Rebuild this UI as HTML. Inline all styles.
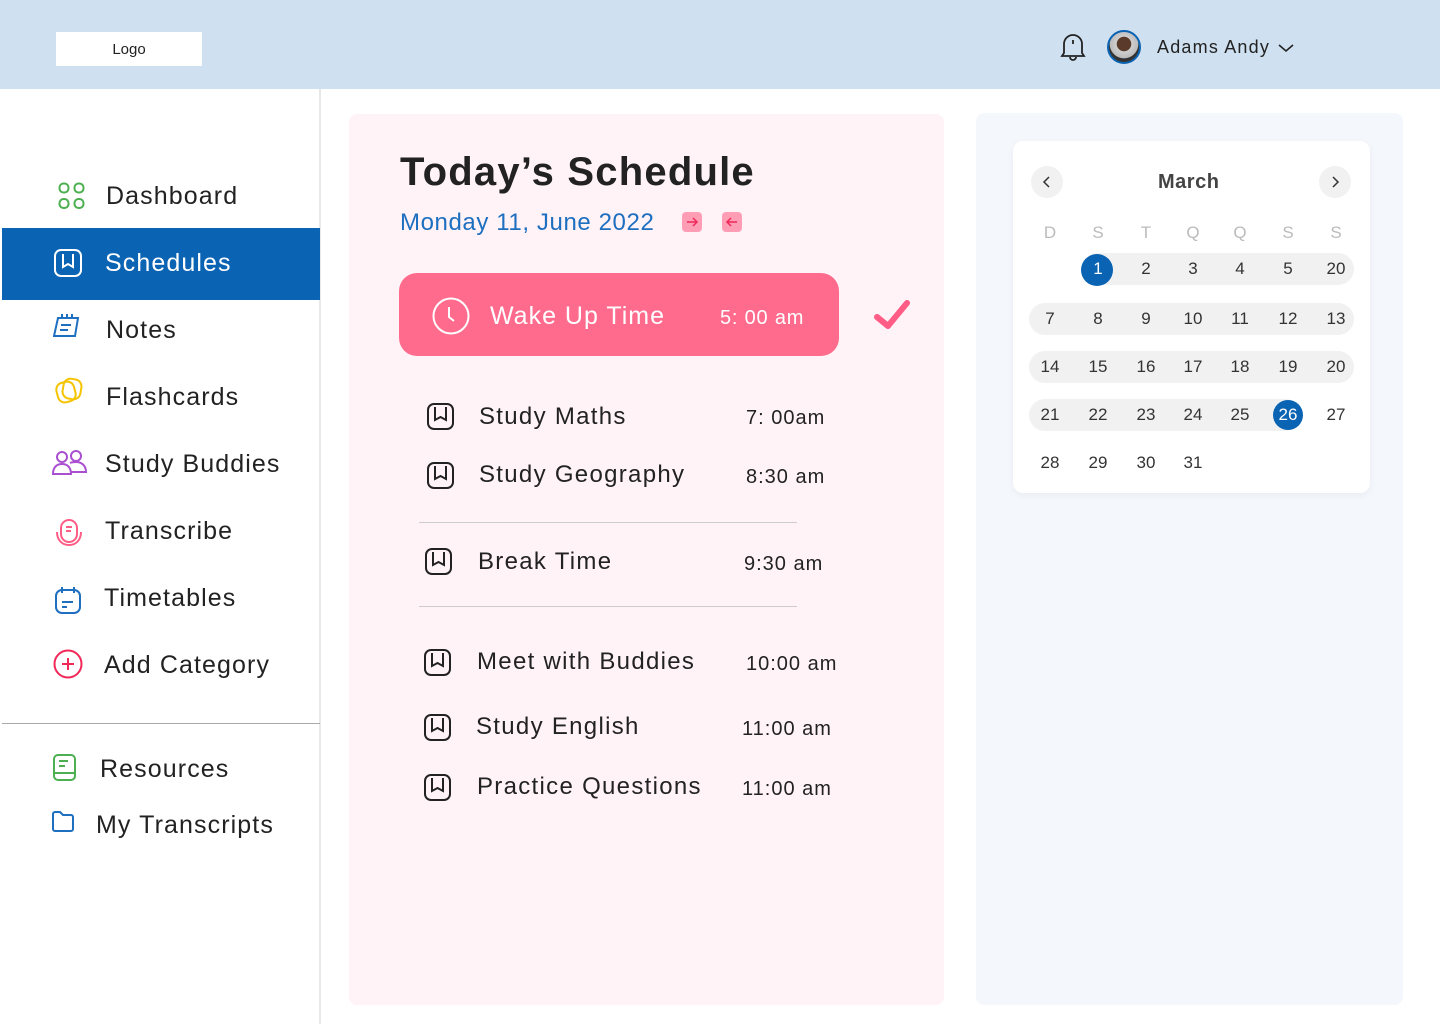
<!DOCTYPE html>
<html><head><meta charset="utf-8"><style>
*{margin:0;padding:0;box-sizing:border-box}
body{width:1440px;height:1024px;background:#fff;font-family:"Liberation Sans",sans-serif;color:#222;position:relative;overflow:hidden}
.a{position:absolute}
.hdr{left:0;top:0;width:1440px;height:89px;background:#cfe0f0}
.logo{left:56px;top:32px;width:146px;height:34px;background:#fff;font-size:15px;text-align:center;line-height:36px}
.side{left:319px;top:89px;width:2px;height:935px;background:#e8e8e8}
.nav{font-size:25px;color:#222;letter-spacing:1.1px;margin-top:2px}
.sel{left:2px;top:228px;width:318px;height:72px;background:#0b63b3}
.card{left:349px;top:114px;width:595px;height:891px;background:#fff3f7;border-radius:8px}
.rp{left:976px;top:113px;width:427px;height:892px;background:#f4f8fc;border-radius:8px}
.cal{left:1013px;top:141px;width:357px;height:352px;background:#fff;border-radius:10px;box-shadow:0 2px 8px rgba(0,0,0,.05)}
.d{font-size:17px;color:#333;width:40px;text-align:center;transform:translateX(-20px);margin-top:1px}
.h{color:#bbb}
.pill{background:#f1f1f1;border-radius:16px;height:32px}
.it{font-size:24px;color:#222;letter-spacing:1.3px;margin-top:2px}
.tm{font-size:20px;color:#222;letter-spacing:1px;margin-top:2px}
</style></head><body>
<div class="a hdr"></div>
<div class="a logo">Logo</div>
<svg class="a" style="left:1059px;top:32px" width="28" height="30" viewBox="0 0 28 30" fill="none" stroke="#222" stroke-width="1.8"><path d="M5 21 V12 a9 9 0 0 1 18 0 V21 L25 24 H3 Z"/><path d="M11 25 a3 3 0 0 0 6 0"/><path d="M14 8v4"/></svg>
<div class="a" style="left:1107px;top:30px;width:34px;height:34px;border-radius:50%;border:2px solid #0b63b3;background:radial-gradient(circle at 50% 40%,#5a3a2a 30%,#cfcfcf 32%,#bbb 60%,#333 62%)"></div>
<div class="a" style="left:1157px;top:37px;font-size:18px;letter-spacing:1.2px">Adams Andy</div>
<svg class="a" style="left:1277px;top:42px" width="18" height="12" viewBox="0 0 18 12"><path d="M2 3l7 6 7-6" fill="none" stroke="#222" stroke-width="1.6"/></svg>

<div class="a side"></div>
<div class="a sel"></div>
<svg class="a" style="left:58px;top:182px" width="28" height="28" fill="none" stroke="#4caf50" stroke-width="2"><rect x="1.5" y="1.5" width="9" height="9" rx="4"/><rect x="16.5" y="1.5" width="9" height="9" rx="4"/><rect x="1.5" y="17" width="9" height="9" rx="4"/><rect x="16.5" y="17" width="9" height="9" rx="4"/></svg>
<div class="a nav" style="left:106px;top:180px">Dashboard</div>
<svg class="a" style="left:54px;top:249px" width="28" height="28" fill="none" stroke="#fff" stroke-width="2"><rect x="1" y="1" width="26" height="26" rx="6"/><path d="M9 5v13l5-3 5 3V5"/></svg>
<div class="a nav" style="left:105px;top:247px;color:#fff">Schedules</div>
<svg class="a" style="left:53px;top:313px" width="28" height="26" fill="none" stroke="#1e6fc0" stroke-width="2"><path d="M5 5h20l-3 18H1z"/><path d="M9 1v5M14 1v5M19 1v5M8 12h10M7 17h8"/></svg>
<div class="a nav" style="left:106px;top:314px">Notes</div>
<svg class="a" style="left:54px;top:377px" width="30" height="30" fill="none" stroke="#f5c400" stroke-width="2"><rect x="3" y="5" width="18" height="20" rx="7" transform="rotate(-15 12 15)"/><rect x="9" y="2" width="18" height="20" rx="7" transform="rotate(10 18 12)"/></svg>
<div class="a nav" style="left:106px;top:381px">Flashcards</div>
<svg class="a" style="left:52px;top:450px" width="36" height="26" fill="none" stroke="#a94fd0" stroke-width="2"><circle cx="10" cy="7" r="5"/><circle cx="24" cy="6" r="5"/><path d="M1 24c0-7 4-10 9-10s9 3 9 10zM18 13c2-1 3-1 6-1 5 0 10 3 10 10h-15"/></svg>
<div class="a nav" style="left:105px;top:448px">Study Buddies</div>
<svg class="a" style="left:55px;top:518px" width="28" height="30" fill="none" stroke="#ff5d86" stroke-width="2"><rect x="6" y="2" width="16" height="22" rx="8"/><path d="M2 14c0 8 5 13 12 13s12-5 12-13M11 9h6M11 13h5"/></svg>
<div class="a nav" style="left:105px;top:515px">Transcribe</div>
<svg class="a" style="left:54px;top:585px" width="28" height="30" fill="none" stroke="#1e6fc0" stroke-width="2"><rect x="2" y="5" width="24" height="23" rx="6"/><path d="M8 2v6M20 2v6M8 17h11M8 22h5"/></svg>
<div class="a nav" style="left:104px;top:582px">Timetables</div>
<svg class="a" style="left:53px;top:649px" width="30" height="30" fill="none" stroke="#f0285a" stroke-width="2"><circle cx="15" cy="15" r="13.5"/><path d="M15 9v12M9 15h12"/></svg>
<div class="a nav" style="left:104px;top:649px">Add Category</div>
<div class="a" style="left:2px;top:723px;width:318px;height:1px;background:#aaa"></div>
<svg class="a" style="left:53px;top:754px" width="24" height="28" fill="none" stroke="#4caf50" stroke-width="2"><rect x="1" y="1" width="21" height="25" rx="4"/><path d="M1 19h21M6 7h9M6 12h6"/></svg>
<div class="a nav" style="left:100px;top:753px">Resources</div>
<svg class="a" style="left:51px;top:811px" width="24" height="22" fill="none" stroke="#1e6fc0" stroke-width="2"><path d="M2 3a2 2 0 0 1 2-2h5l3 3h8a2 2 0 0 1 2 2v12a2 2 0 0 1-2 2H4a2 2 0 0 1-2-2z"/></svg>
<div class="a nav" style="left:96px;top:809px">My Transcripts</div>

<div class="a card"></div>
<div class="a" style="left:400px;top:150px;font-size:40px;font-weight:bold;color:#222;letter-spacing:1.2px">Today’s Schedule</div>
<div class="a" style="left:400px;top:209px;font-size:24px;color:#1e6fc0;letter-spacing:.6px">Monday 11, June 2022</div>
<svg class="a" style="left:682px;top:212px" width="20" height="20"><rect width="20" height="20" rx="4" fill="#ff9db5"/><path d="M5 10h10M11 6l4 4-4 4" fill="none" stroke="#f0285a" stroke-width="1.5"/></svg>
<svg class="a" style="left:722px;top:212px" width="20" height="20"><rect width="20" height="20" rx="4" fill="#ff9db5"/><path d="M15 10H5M9 6l-4 4 4 4" fill="none" stroke="#f0285a" stroke-width="1.5"/></svg>
<div class="a" style="left:399px;top:273px;width:440px;height:83px;background:#ff6b8d;border-radius:18px"></div>
<svg class="a" style="left:431px;top:296px" width="40" height="40" fill="none" stroke="#fff" stroke-width="2"><circle cx="20" cy="20" r="17.5"/><path d="M18 11v10l5 4"/></svg>
<div class="a" style="left:490px;top:302px;font-size:25px;color:#fff;letter-spacing:1px">Wake Up Time</div>
<div class="a" style="left:720px;top:307px;font-size:20px;color:#fff;letter-spacing:.8px">5: 00 am</div>
<svg class="a" style="left:872px;top:298px" width="40" height="34"><path d="M5 19l11 9L35 5" fill="none" stroke="#ff5d86" stroke-width="6" stroke-linecap="round" stroke-linejoin="round"/></svg>

<svg width="0" height="0" style="position:absolute"><defs><g id="bk" fill="none" stroke="#222" stroke-width="2"><rect x="1" y="1" width="25" height="25" rx="6"/><path d="M8 4v13l5.5-3 5.5 3V4"/></g></defs></svg>
<svg class="a" style="left:427px;top:403px" width="28" height="28"><use href="#bk"/></svg>
<div class="a it" style="left:479px;top:401px">Study Maths</div><div class="a tm" style="left:746px;top:405px">7: 00am</div>
<svg class="a" style="left:427px;top:462px" width="28" height="28"><use href="#bk"/></svg>
<div class="a it" style="left:479px;top:459px">Study Geography</div><div class="a tm" style="left:746px;top:464px">8:30 am</div>
<div class="a" style="left:419px;top:522px;width:378px;height:1px;background:#ccc"></div>
<svg class="a" style="left:425px;top:548px" width="28" height="28"><use href="#bk"/></svg>
<div class="a it" style="left:478px;top:546px">Break Time</div><div class="a tm" style="left:744px;top:551px">9:30 am</div>
<div class="a" style="left:419px;top:606px;width:378px;height:1px;background:#ccc"></div>
<svg class="a" style="left:424px;top:649px" width="28" height="28"><use href="#bk"/></svg>
<div class="a it" style="left:477px;top:646px">Meet with Buddies</div><div class="a tm" style="left:746px;top:651px">10:00 am</div>
<svg class="a" style="left:424px;top:714px" width="28" height="28"><use href="#bk"/></svg>
<div class="a it" style="left:476px;top:711px">Study English</div><div class="a tm" style="left:742px;top:716px">11:00 am</div>
<svg class="a" style="left:424px;top:774px" width="28" height="28"><use href="#bk"/></svg>
<div class="a it" style="left:477px;top:771px">Practice Questions</div><div class="a tm" style="left:742px;top:776px">11:00 am</div>

<div class="a rp"></div>
<div class="a cal"></div>
<svg class="a" style="left:1031px;top:166px" width="32" height="32"><circle cx="16" cy="16" r="16" fill="#f1f1f1"/><path d="M18 11l-5 5 5 5" fill="none" stroke="#333" stroke-width="1.5"/></svg>
<svg class="a" style="left:1319px;top:166px" width="32" height="32"><circle cx="16" cy="16" r="16" fill="#f1f1f1"/><path d="M14 11l5 5-5 5" fill="none" stroke="#333" stroke-width="1.5"/></svg>
<div class="a" style="left:1158px;top:171px;font-size:20px;font-weight:bold;color:#444;letter-spacing:.5px">March</div>
<div class="a pill" style="left:1082px;top:253px;width:272px"></div>
<div class="a pill" style="left:1029px;top:303px;width:325px"></div>
<div class="a pill" style="left:1029px;top:351px;width:325px"></div>
<div class="a pill" style="left:1029px;top:399px;width:272px"></div>
<div class="a" style="left:1081px;top:254px;width:32px;height:32px;border-radius:50%;background:#0b63b3"></div>
<div class="a" style="left:1273px;top:400px;width:30px;height:30px;border-radius:50%;background:#0b63b3"></div>
<div id="g"></div>
<script>
var xs=[1050,1098,1146,1193,1240,1288,1336],ys=[222,258,308,356,404,452];
var rows=[["D","S","T","Q","Q","S","S"],["","1","2","3","4","5","20"],["7","8","9","10","11","12","13"],["14","15","16","17","18","19","20"],["21","22","23","24","25","26","27"],["28","29","30","31","","",""]];
var h="";rows.forEach(function(r,i){r.forEach(function(t,j){if(!t)return;var c="a d"+(i==0?" h":"");var st="left:"+xs[j]+"px;top:"+ys[i]+"px;";if((i==1&&j==1)||(i==4&&j==5))st+="color:#fff;";h+='<div class="'+c+'" style="'+st+'">'+t+'</div>';});});
document.getElementById("g").innerHTML=h;
</script>
</body></html>
